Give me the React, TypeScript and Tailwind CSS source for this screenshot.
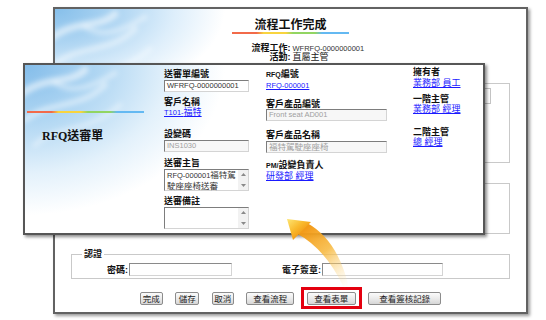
import React from "react";

const FONT = "font-['Liberation_Sans','Noto_Sans_CJK_TC',sans-serif]";

function Rainbow({ className }: { className: string }) {
  return (
    <div
      className={
        "h-[2px] bg-[linear-gradient(90deg,#f26a4a_0%,#f26a4a_21%,#f8d43f_27%,#f8d43f_46%,#92d562_52%,#92d562_71%,#64b9f2_77%,#64b9f2_100%)] " +
        className
      }
    />
  );
}

function Swirls({ id }: { id: string }) {
  return (
    <svg className="absolute left-0 top-0 pointer-events-none" width="200" height="140" viewBox="0 0 200 140">
      <defs>
        <filter id={id} x="-20%" y="-20%" width="140%" height="140%">
          <feGaussianBlur stdDeviation="2.5" />
        </filter>
      </defs>
      <g filter={`url(#${id})`} fill="none" stroke="#ffffff" strokeLinecap="round">
        <path d="M-5 30 C 20 10, 45 20, 60 5" strokeWidth="7" opacity="0.55" />
        <path d="M0 55 C 25 35, 55 45, 80 20" strokeWidth="6" opacity="0.45" />
        <path d="M10 80 C 30 60, 60 70, 95 40" strokeWidth="5" opacity="0.35" />
        <path d="M30 18 C 50 30, 70 20, 90 8" strokeWidth="5" opacity="0.4" />
      </g>
    </svg>
  );
}

function Label({ children, className = "" }: { children: React.ReactNode; className?: string }) {
  return <div className={"text-[9px] leading-[10px] font-bold whitespace-nowrap text-[#111] " + className}>{children}</div>;
}

function Link({ children, className = "" }: { children: React.ReactNode; className?: string }) {
  return (
    <div className={"text-[9px] leading-[10px] whitespace-nowrap text-[#1a1aff] underline underline-offset-[1px] " + className}>
      {children}
    </div>
  );
}

function Input({
  children,
  className,
  disabled = false,
}: {
  children?: React.ReactNode;
  className: string;
  disabled?: boolean;
}) {
  return (
    <div
      className={
        "h-[12px] flex items-center px-[2px] border border-t-[#7d7d7d] border-l-[#7d7d7d] border-r-[#d4d4d4] border-b-[#d4d4d4] whitespace-nowrap overflow-hidden " +
        (disabled ? "bg-[#f7f7f7] text-[#a0a0a0] " : "bg-white text-[#333] ") +
        className
      }
    >
      {children}
    </div>
  );
}

function ScrollArrows() {
  return (
    <div className="w-[10px] bg-[#f2f2f2] flex flex-col justify-between items-center py-[3px]">
      <svg width="5" height="3" viewBox="0 0 5 3">
        <path d="M0 3 L2.5 0 L5 3 Z" fill="#8a8a8a" />
      </svg>
      <svg width="5" height="3" viewBox="0 0 5 3">
        <path d="M0 0 L2.5 3 L5 0 Z" fill="#8a8a8a" />
      </svg>
    </div>
  );
}

function TextArea({ children }: { children?: React.ReactNode }) {
  return (
    <div className="flex w-[85px] h-[22px] border border-t-[#7d7d7d] border-l-[#7d7d7d] border-r-[#d4d4d4] border-b-[#d4d4d4] bg-white">
      <div className="flex-1 px-[2px] text-[8.5px] leading-[10px] text-[#333] whitespace-nowrap">{children}</div>
      <ScrollArrows />
    </div>
  );
}

function Btn({ children, className }: { children: React.ReactNode; className: string }) {
  return (
    <div
      className={
        "h-[13px] flex items-center justify-center rounded-[2px] border border-[#8c8c8c] bg-[linear-gradient(180deg,#fbfbfb_0%,#e9e9e9_55%,#d6d6d6_100%)] text-[8.5px] leading-[10px] text-[#222] " +
        className
      }
    >
      {children}
    </div>
  );
}

function BackWindow() {
  return (
    <div className="absolute left-[53px] top-[7px] w-[475px] h-[307px] border-2 border-[#626262] shadow-[2px_2px_3px_rgba(0,0,0,0.4)] bg-[radial-gradient(ellipse_170px_95px_at_0%_0%,#86bfea_0%,#acd4f2_35%,#ddeefb_70%,#ffffff_100%)] overflow-hidden">
      <Swirls id="swA" />
      <div className="relative flex flex-col">
        <div className="pt-[9px] flex flex-col items-center">
          <div className="text-[12px] leading-[14px] font-bold text-[#111]">流程工作完成</div>
          <Rainbow className="w-[117px]" />
        </div>
        <div className="mt-[10px] grid grid-cols-2 text-[9px] leading-[9px]">
          <div className="text-right font-bold">流程工作:</div>
          <div className="pl-[2px] text-[7.5px] text-[#333]">WFRFQ-0000000001</div>
          <div className="text-right font-bold">活動:</div>
          <div className="pl-[2px] text-[#222]">直屬主管</div>
        </div>
        <div className="mx-[16px] mt-[21px] h-[80px] border border-[#c9c9c9] pt-[4px]">
          <div className="ml-[20px] mr-[18px] h-[16px] border border-[#c4c4c4]" />
        </div>
        <div className="mx-[16px] mt-[20px] h-[51px] border border-[#c9c9c9]" />
        <fieldset className="mx-[16px] mt-[15px] border border-[#c9c9c9] pb-[2px]">
          <legend className="ml-[10px] px-[2px] text-[9px] leading-[10px] font-bold">認證</legend>
          <div className="mt-[4px] flex items-center h-[13px]">
            <div className="w-[56px] text-right text-[9px] leading-[10px] font-bold">密碼:</div>
            <div className="ml-[1px] w-[103px] h-[13px] bg-white border border-t-[#8a8a8a] border-l-[#8a8a8a] border-r-[#d4d4d4] border-b-[#d4d4d4]" />
            <div className="w-[89px] text-right text-[9px] leading-[10px] font-bold">電子簽章:</div>
            <div className="ml-[1px] w-[121px] h-[13px] bg-white border border-t-[#8a8a8a] border-l-[#8a8a8a] border-r-[#d4d4d4] border-b-[#d4d4d4]" />
          </div>
        </fieldset>
        <div className="mt-[13px] flex justify-center gap-[12.5px]">
          <Btn className="w-[23px]">完成</Btn>
          <Btn className="w-[24px]">儲存</Btn>
          <Btn className="w-[22px]">取消</Btn>
          <Btn className="w-[48px]">查看流程</Btn>
          <div className="relative">
            <Btn className="w-[49px]">查看表單</Btn>
            <div className="absolute -left-[6px] -right-[6px] -top-[5px] -bottom-[4px] border-[3px] border-[#e4000f]" />
          </div>
          <Btn className="w-[73px]">查看簽核記錄</Btn>
        </div>
      </div>
    </div>
  );
}

function FrontWindow() {
  return (
    <div className="absolute left-[23px] top-[63px] w-[462px] h-[172px] border-2 border-[#565656] shadow-[2px_2px_3px_rgba(0,0,0,0.45)] bg-[radial-gradient(ellipse_200px_150px_at_0%_0%,#84bdea_0%,#b1d7f3_38%,#e3f1fb_72%,#ffffff_100%)] flex overflow-hidden">
      <Swirls id="swB" />
      <div className="relative w-[139px] pt-[46px] flex flex-col">
        <Rainbow className="ml-[2px] w-[117px]" />
        <div className="mt-[16px] pl-[17px] text-[12px] leading-[14px] font-bold text-[#111] font-['Liberation_Serif','Noto_Sans_CJK_TC',serif]">
          RFQ送審單
        </div>
      </div>
      <div className="relative w-[102px] pt-[4px] flex flex-col items-start">
        <Label>送審單編號</Label>
        <Input className="mt-[1px] w-[85px] text-[7.5px]">WFRFQ-0000000001</Input>
        <Label className="mt-[5px]">客戶名稱</Label>
        <Link>
          <span className="text-[7.5px]">T101-</span>福特
        </Link>
        <Label className="mt-[11px]">設變碼</Label>
        <Input disabled className="mt-[1px] w-[85px] text-[7.5px]">
          INS1030
        </Input>
        <Label className="mt-[6px]">送審主旨</Label>
        <div className="mt-[1px]">
          <TextArea>
            <span className="text-[7.5px]">RFQ-000001</span>福特駕
            <br />
            駛座座椅送審
          </TextArea>
        </div>
        <Label className="mt-[5px]">送審備註</Label>
        <div className="mt-[1px]">
          <TextArea />
        </div>
      </div>
      <div className="relative w-[147px] pt-[4px] flex flex-col items-start">
        <Label>
          <span className="text-[7px]">RFQ</span>編號
        </Label>
        <Link>
          <span className="text-[7.5px]">RFQ-000001</span>
        </Link>
        <Label className="mt-[8px]">客戶產品編號</Label>
        <Input disabled className="w-[121px] text-[7.5px]">
          Front seat AD001
        </Input>
        <Label className="mt-[9px]">客戶產品名稱</Label>
        <Input disabled className="mt-[1px] w-[121px] text-[8.5px]">
          福特駕駛座座椅
        </Input>
        <Label className="mt-[7px]">
          <span className="text-[7px]">PM/</span>設變負責人
        </Label>
        <Link>研發部 經理</Link>
      </div>
      <div className="relative flex-1 pt-[2px] flex flex-col items-start">
        <Label>擁有者</Label>
        <Link className="mt-[1px]">業務部 員工</Link>
        <Label className="mt-[6px]">一階主管</Label>
        <Link>業務部 經理</Link>
        <Label className="mt-[13px]">二階主管</Label>
        <Link>總 經理</Link>
      </div>
    </div>
  );
}

function Arrow() {
  return (
    <svg className="absolute left-0 top-0 pointer-events-none" width="546" height="320" viewBox="0 0 546 320">
      <defs>
        <linearGradient id="shaftG" x1="300" y1="228" x2="346" y2="288" gradientUnits="userSpaceOnUse">
          <stop offset="0" stopColor="#f29510" />
          <stop offset="0.45" stopColor="#f7b73a" stopOpacity="0.85" />
          <stop offset="1" stopColor="#fde8b0" stopOpacity="0" />
        </linearGradient>
        <linearGradient id="headG" x1="290" y1="219" x2="304" y2="236" gradientUnits="userSpaceOnUse">
          <stop offset="0" stopColor="#fde06a" />
          <stop offset="0.5" stopColor="#f9b92c" />
          <stop offset="1" stopColor="#f09010" />
        </linearGradient>
      </defs>
      <path d="M296 233 Q326 249 344 288 L349 288 Q338 240 307 223 Z" fill="url(#shaftG)" />
      <path d="M287 219 L311 222 L293 240 Z" fill="url(#headG)" />
    </svg>
  );
}

export default function App() {
  return (
    <div className={"relative w-[546px] h-[320px] bg-white overflow-hidden text-[#111] " + FONT}>
      <BackWindow />
      <FrontWindow />
      <Arrow />
    </div>
  );
}
